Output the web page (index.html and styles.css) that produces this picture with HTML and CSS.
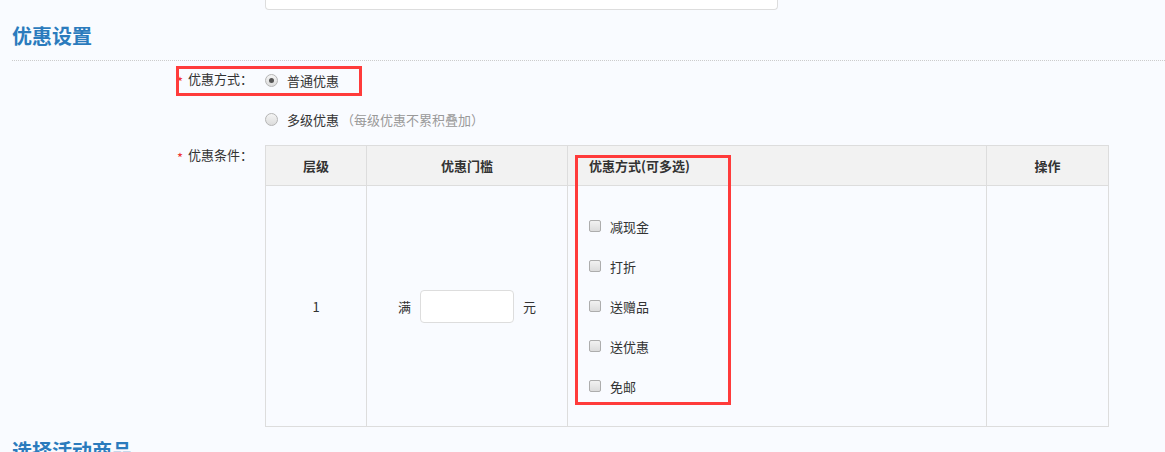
FILE: index.html
```html
<!DOCTYPE html>
<html>
	<head>
		<meta charset="UTF-8">
		<title>优惠设置</title>
		<link rel="stylesheet" href="styles.css">
	</head>
	<body>
		<div class="page">
			<div class="top-input"></div>

			<h2 class="section-title">优惠设置</h2>
			<div class="divider"></div>

			<div class="form">
				<div class="mark mark-type"></div>

				<div class="form-row row-type">
					<label class="form-label"><i>*</i>优惠方式：</label>
					<div class="form-field">
						<span class="radio checked"></span>
						<span>普通优惠</span>
					</div>
				</div>

				<div class="form-row row-multi">
					<label class="form-label"></label>
					<div class="form-field">
						<span class="radio"></span>
						<span>多级优惠</span>
						<span class="tip">（每级优惠不累积叠加）</span>
					</div>
				</div>

				<div class="form-row row-cond">
					<label class="form-label"><i>*</i>优惠条件：</label>
					<div class="form-field table-wrap">
						<div class="mark mark-ways"></div>
						<table class="level-table">
							<colgroup>
								<col class="c1">
								<col class="c2">
								<col class="c3">
								<col class="c4">
							</colgroup>
							<thead>
								<tr>
									<th>层级</th>
									<th>优惠门槛</th>
									<th class="left">优惠方式(可多选)</th>
									<th>操作</th>
								</tr>
							</thead>
							<tbody>
								<tr>
									<td>1</td>
									<td>
										<div class="threshold">
											<span>满</span>
											<span class="text-input"></span>
											<span>元</span>
										</div>
									</td>
									<td class="left">
										<ul class="ways">
											<li><span class="checkbox"></span>减现金</li>
											<li><span class="checkbox"></span>打折</li>
											<li><span class="checkbox"></span>送赠品</li>
											<li><span class="checkbox"></span>送优惠</li>
											<li><span class="checkbox"></span>免邮</li>
										</ul>
									</td>
									<td></td>
								</tr>
							</tbody>
						</table>
					</div>
				</div>
			</div>

			<h2 class="section-title next-title">选择活动商品</h2>
		</div>
	</body>
</html>
```

FILE: styles.css
```css
body {
	margin: 0;
	background-color: #f9fbff;
	font-family: "Noto Sans CJK SC", "Noto Sans", sans-serif;
	font-size: 13px;
	color: #333;
	overflow: hidden;
}

.page {
	padding: 0 0 0 12px;
}

.top-input {
	margin-left: 253px;
	width: 511px;
	height: 9px;
	border: 1px solid #ddd;
	border-top: none;
	border-radius: 0 0 4px 4px;
	background-color: #fff;
}

.section-title {
	margin: 12px 0 0;
	font-size: 20px;
	line-height: 28px;
	font-weight: bold;
	color: #2b7bbd;
}

.divider {
	margin-top: 10px;
	border-bottom: 1px dotted #ccc;
}

.form {
	position: relative;
}

.form-row {
	display: flex;
	align-items: center;
	height: 30px;
}

.row-type {
	margin-top: 4px;
}

.row-multi {
	margin-top: 9px;
}

.row-cond {
	margin-top: 11px;
	height: auto;
	align-items: flex-start;
}

.form-label {
	width: 241px;
	padding-right: 12px;
	text-align: right;
	line-height: 30px;
}

.row-cond .form-label {
	line-height: 20px;
}

.form-label i {
	font-style: normal;
	color: #e33;
	margin-right: 5px;
	vertical-align: -3px;
}

.form-field {
	display: flex;
	align-items: center;
}

.tip {
	color: #999;
	margin-left: 2px;
}

.radio {
	display: inline-block;
	box-sizing: border-box;
	width: 13px;
	height: 13px;
	margin-right: 9px;
	border: 1px solid #b5b5b5;
	border-radius: 50%;
	background: linear-gradient(#f4f4f4, #dcdcdc);
	position: relative;
}

.radio.checked::after {
	content: "";
	position: absolute;
	left: 3px;
	top: 3px;
	width: 5px;
	height: 5px;
	border-radius: 50%;
	background-color: #555;
}

.checkbox {
	display: inline-block;
	box-sizing: border-box;
	width: 12px;
	height: 12px;
	margin-right: 9px;
	border: 1px solid #adadad;
	border-radius: 2px;
	background: linear-gradient(#f2f2f2, #dcdcdc);
}

.table-wrap {
	position: relative;
	display: block;
}

.level-table {
	border-collapse: collapse;
	table-layout: fixed;
	width: 843px;
}

.c1 {
	width: 101px;
}

.c2 {
	width: 201px;
}

.c3 {
	width: 419px;
}

.c4 {
	width: 122px;
}

.level-table th,
.level-table td {
	border: 1px solid #ddd;
	text-align: center;
	padding: 0;
}

.level-table th {
	height: 39px;
	background-color: #f2f2f2;
	font-weight: bold;
}

.level-table td {
	height: 240px;
}

.level-table .left {
	text-align: left;
	padding-left: 21px;
}

.threshold {
	display: flex;
	align-items: center;
	justify-content: center;
	gap: 9px;
}

.text-input {
	display: inline-block;
	box-sizing: border-box;
	width: 94px;
	height: 33px;
	border: 1px solid #ddd;
	border-radius: 4px;
	background-color: #fff;
}

.ways {
	margin: 0;
	padding: 0;
	list-style: none;
}

.ways li {
	display: flex;
	align-items: center;
	height: 40px;
}

.mark {
	position: absolute;
	border: 3px solid #ff3b3b;
	z-index: 2;
}

.mark-type {
	left: 164px;
	top: 1px;
	width: 180px;
	height: 24px;
}

.mark-ways {
	left: 310px;
	top: 10px;
	width: 150px;
	height: 244px;
}

.next-title {
	margin-top: 10px;
}
```
